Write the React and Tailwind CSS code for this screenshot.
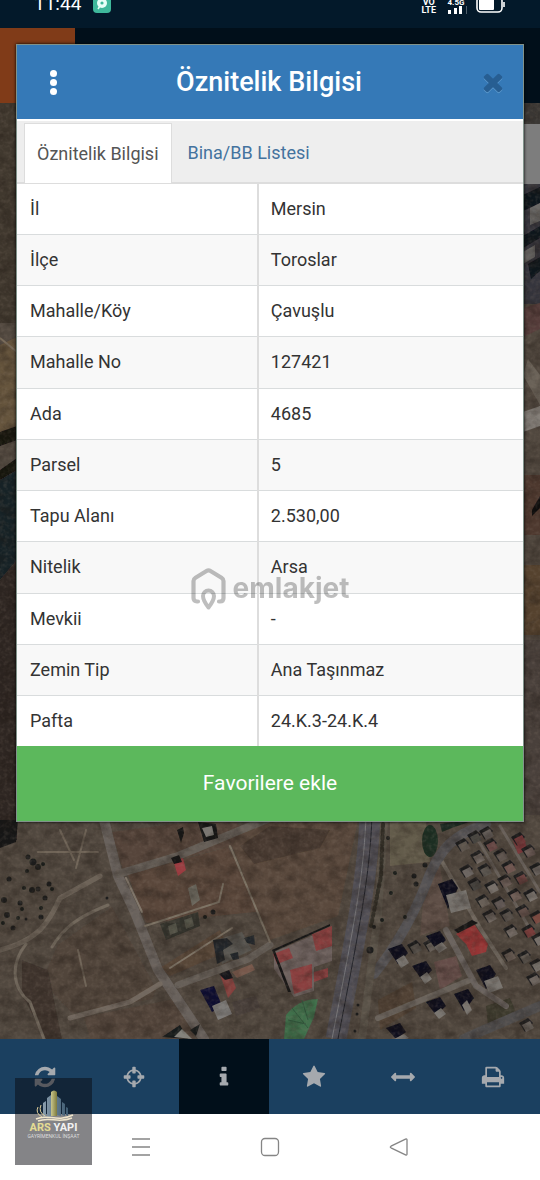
import React, { useState } from 'react';

const attributes = [
  ['İl', 'Mersin'],
  ['İlçe', 'Toroslar'],
  ['Mahalle/Köy', 'Çavuşlu'],
  ['Mahalle No', '127421'],
  ['Ada', '4685'],
  ['Parsel', '5'],
  ['Tapu Alanı', '2.530,00'],
  ['Nitelik', 'Arsa'],
  ['Mevkii', '-'],
  ['Zemin Tip', 'Ana Taşınmaz'],
  ['Pafta', '24.K.3-24.K.4'],
];

const icons = {
  refresh:
    'M1639 1056q0 5-1 7-64 268-268 434.5t-478 166.5q-146 0-282.5-55t-243.5-157l-129 129q-19 19-45 19t-45-19-19-45v-448q0-26 19-45t45-19h448q26 0 45 19t19 45-19 45l-137 137q71 66 161 102t187 36q134 0 250-65t186-179q11-17 53-117 8-23 30-23h192q13 0 22.5 9.5t9.5 22.5zm25-800v448q0 26-19 45t-45 19h-448q-26 0-45-19t-19-45 19-45l138-138q-148-137-349-137-134 0-250 65t-186 179q-11 17-53 117-8 23-30 23h-199q-13 0-22.5-9.5t-9.5-22.5v-7q65-268 270-434.5t480-166.5q146 0 284 55.5t245 156.5l130-129q19-19 45-19t45 19 19 45z',
  crosshairs:
    'M1325 1024h-109q-26 0-45-19t-19-45v-128q0-26 19-45t45-19h109q-32-108-112.5-188.5t-188.5-112.5v109q0 26-19 45t-45 19h-128q-26 0-45-19t-19-45v-109q-108 32-188.5 112.5t-112.5 188.5h109q26 0 45 19t19 45v128q0 26-19 45t-45 19h-109q32 108 112.5 188.5t188.5 112.5v-109q0-26 19-45t45-19h128q26 0 45 19t19 45v109q108-32 188.5-112.5t112.5-188.5zm339-192v128q0 26-19 45t-45 19h-143q-37 161-154.5 278.5t-278.5 154.5v143q0 26-19 45t-45 19h-128q-26 0-45-19t-19-45v-143q-161-37-278.5-154.5t-154.5-278.5h-143q-26 0-45-19t-19-45v-128q0-26 19-45t45-19h143q37-161 154.5-278.5t278.5-154.5v-143q0-26 19-45t45-19h128q26 0 45 19t19 45v143q161 37 278.5 154.5t154.5 278.5h143q26 0 45 19t19 45z',
  info: 'M1216 1344v128q0 26-19 45t-45 19h-512q-26 0-45-19t-19-45v-128q0-26 19-45t45-19h64v-384h-64q-26 0-45-19t-19-45v-128q0-26 19-45t45-19h384q26 0 45 19t19 45v576h64q26 0 45 19t19 45zm-128-1152v192q0 26-19 45t-45 19h-256q-26 0-45-19t-19-45v-192q0-26 19-45t45-19h256q26 0 45 19t19 45z',
  star: 'M1728 647q0 22-26 48l-363 354 86 500q1 7 1 20 0 21-10.5 35.5t-30.5 14.5q-19 0-40-12l-449-236-449 236q-22 12-40 12-21 0-31.5-14.5t-10.5-35.5q0-6 2-20l86-500-364-354q-25-27-25-48 0-37 56-46l502-73 225-455q19-41 49-41t49 41l225 455 502 73q56 9 56 46z',
  arrows:
    'M1792 896q0 26-19 45l-256 256q-19 19-45 19t-45-19-19-45v-128h-1024v128q0 26-19 45t-45 19-45-19l-256-256q-19-19-19-45t19-45l256-256q19-19 45-19t45 19 19 45v128h1024v-128q0-26 19-45t45-19 45 19l256 256q19 19 19 45z',
  print:
    'M448 1536h896v-256h-896v256zm0-640h896v-384h-160q-40 0-68-28t-28-68v-160h-640v640zm1152 64q0-26-19-45t-45-19-45 19-19 45 19 45 45 19 45-19 19-45zm128 0v416q0 13-9.5 22.5t-22.5 9.5h-224v160q0 40-28 68t-68 28h-960q-40 0-68-28t-28-68v-160h-224q-13 0-22.5-9.5t-9.5-22.5v-416q0-79 56.5-135.5t135.5-56.5h64v-544q0-40 28-68t68-28h672q40 0 88 20t76 48l152 152q28 28 48 76t20 88v256h64q79 0 135.5 56.5t56.5 135.5z',
  times:
    'M1490 1322q0 40-28 68l-136 136q-28 28-68 28t-68-28l-294-294-294 294q-28 28-68 28t-68-28l-136-136q-28-28-28-68t28-68l294-294-294-294q-28-28-28-68t28-68l136-136q28-28 68-28t68 28l294 294 294-294q28-28 68-28t68 28l136 136q28 28 28 68t-28 68l-294 294 294 294q28 28 28 68z',
};

const tools = [
  { id: 'refresh', label: 'Yenile' },
  { id: 'crosshairs', label: 'Konum' },
  { id: 'info', label: 'Bilgi' },
  { id: 'star', label: 'Favoriler' },
  { id: 'arrows', label: 'Ölçüm' },
  { id: 'print', label: 'Yazdır' },
];

// [x, y, size] of the shrubs on the west side
const shrubs = [
  [28, 857, 4], [33, 862, 6], [38, 867, 5], [43, 864, 3], [9, 879, 4], [27, 871, 3], [24, 888, 3],
  [32, 890, 5], [38, 889, 4], [49, 884, 4], [52, 889, 3], [45, 898, 4], [4, 900, 5], [20, 903, 4],
  [22, 909, 3], [7, 915, 5], [41, 908, 3], [41, 917, 4], [18, 918, 3], [3, 923, 3], [26, 919, 2],
  [13, 928, 4], [107, 898, 2], [205, 917, 3], [213, 912, 4], [370, 950, 6],
  [388, 838, 3], [395, 873, 3], [414, 876, 4], [391, 893, 3], [416, 884, 4], [425, 865, 4], [358, 1005, 2],
  [357, 1014, 2], [355, 1031, 2], [374, 927, 3], [382, 920, 3], [405, 917, 3],
];

// [x, y, roof colour] of the houses in the eastern district
const houses = [
  [462, 846, '#5d544e'], [474, 838, '#4a4642'], [486, 834, '#6b645e'], [490, 846, '#6a4a46'], [477, 858, '#746c66'],
  [500, 856, '#5e5450'], [466, 872, '#6c6662'], [484, 871, '#5a5450'], [508, 868, '#6e5450'], [518, 840, '#7b3a3c'],
  [528, 852, '#6a5a54'], [474, 885, '#4b4844'], [491, 888, '#77706a'], [504, 882, '#6b5c56'], [520, 879, '#6b433f'],
  [536, 870, '#6a645e'], [482, 902, '#696159'], [498, 904, '#5f5753'], [514, 896, '#705e58'], [530, 896, '#7c7670'],
  [489, 917, '#6e6660'], [506, 916, '#5b5550'], [522, 912, '#62504a'], [536, 918, '#7a4840'], [510, 932, '#746c66'],
  [528, 932, '#7a3d3a'], [538, 940, '#77706a'], [508, 956, '#6c6058'], [524, 958, '#5c5650'], [536, 966, '#7a746e'],
  [533, 980, '#6e6660'], [526, 1026, '#6c6660'], [430, 946, '#6a645c'], [414, 948, '#5a554f'],
];

// [x, y, w, h] of the apartment blocks, each casting a shadow to the north west
const blocks = [
  [446, 890, 26, 26], [396, 955, 14, 16], [434, 942, 14, 14], [420, 972, 13, 15], [484, 976, 20, 20],
  [434, 1008, 13, 14], [462, 1000, 11, 18], [394, 1034, 16, 12],
];

function Icon({ name, className }) {
  return (
    <svg viewBox="0 0 1792 1792" fill="currentColor" className={className} aria-hidden="true">
      <path d={icons[name]} />
    </svg>
  );
}

function SatelliteMap() {
  return (
    <svg
      viewBox="0 103 540 936"
      preserveAspectRatio="xMidYMax slice"
      className="absolute inset-0 h-full w-full"
      aria-hidden="true"
    >
      <defs>
        <filter id="grain" x="0" y="0" width="100%" height="100%" colorInterpolationFilters="sRGB">
          <feTurbulence type="fractalNoise" baseFrequency="0.07 0.09" numOctaves="5" seed="7" />
          <feColorMatrix values="0 0 0 0 0.12  0 0 0 0 0.09  0 0 0 0 0.07  2.4 0 0 0 -0.95" />
        </filter>
        <filter id="light" x="0" y="0" width="100%" height="100%" colorInterpolationFilters="sRGB">
          <feTurbulence type="fractalNoise" baseFrequency="0.25" numOctaves="3" seed="3" />
          <feColorMatrix values="0 0 0 0 0.54  0 0 0 0 0.48  0 0 0 0 0.43  0 2.4 0 0 -1" />
        </filter>
        <filter id="soft">
          <feGaussianBlur stdDeviation="0.7" />
        </filter>
      </defs>
      <rect y="103" width="540" height="936" fill="#51483f" />

      <g filter="url(#soft)">
        {/* strip west of the dialog */}
        <path d="M0 103h17v220H0z" fill="#41382f" />
        <path d="M0 345l17-8v90l-17 6z" fill="#66543e" />
        <path d="M0 338l17 14" stroke="#776a58" strokeWidth="2" />
        <path d="M0 432l17-6v14l-17 6zM0 470l17-12v12l-17 10z" fill="#14120f" />
        <path d="M0 480l17-10v90l-17 20z" fill="#192025" />
        <path d="M0 580l17-20v280H0z" fill="#2e2523" />
        <path d="M0 820h18l-2 22-16 6z" fill="#191919" />

        {/* strip east of the dialog */}
        <path d="M523 103h17v25h-17z" fill="#3b3835" />
        <path d="M523 184h17v120h-17z" fill="#34353c" />
        <path d="M523 195l17-8v16l-17 8zM523 236l17-10v12l-17 10zM528 264l12-7v14l-9 8z" fill="#10121c" />
        <path d="M530 208l10-5v18l-10 4zM523 252l12-7v12l-12 7z" fill="#696866" />
        <path d="M523 308l17-5v26l-17 8z" fill="#573d3b" />
        <path d="M523 375l17 30v-30l-12-16z" fill="#6a6258" />
        <path d="M523 412l17-6v20l-17 6z" fill="#85807a" />
        <path d="M523 475h17v60h-17z" fill="#4d372e" />
        <path d="M532 510l8-14v12l-8 8z" fill="#110f10" />
        <path d="M523 565h17v70h-17z" fill="#54432f" />
        <path d="M523 640h17v175h-17z" fill="#49413a" />

        {/* fields */}
        <path d="M112 832l62-8 60-4 20 20-130 34z" fill="#56453a" />
        <path d="M128 875l100-28 36 64-118 12z" fill="#5a463a" />
        <path d="M250 820h108l-20 96-68 24-38-94z" fill="#5a4a3c" />
        <path d="M240 846l30-20 60 4-10 18-66 16z" fill="#4a3a30" />
        <path d="M58 945l54-38 44 82-4 10-80 14-30-32z" fill="#51443a" />
        <path d="M22 960l26 10 14 69H46l-24-44z" fill="#3f362f" />
        <path d="M160 968l60-38 10 20-60 26z" fill="#594639" />
        <path d="M90 1039l-6-22 90-18 22 40z" fill="#54473c" />
        <path d="M390 822h36l4 40-40 4z" fill="#645b4b" />
        <path d="M424 890l16-24 10 60-30 10z" fill="#5e5046" />
        <path d="M378 1000l34-18 4 26-36 22z" fill="#514335" />
        <path d="M434 962l22-6 6 20-22 14z" fill="#654e48" />
        <path d="M486 1006l24-8 6 14-28 14z" fill="#3e3a2d" />

        {/* roads and tracks */}
        <g fill="none" strokeLinecap="round">
          <path d="M104 820l14 56 16 34 24 60 46 69" stroke="#69625d" strokeWidth="10" />
          <path d="M118 874l60-18 92-38" stroke="#665f58" strokeWidth="8" />
          <path d="M178 985l70-26 22-14" stroke="#665f58" strokeWidth="7" />
          <path d="M70 1018l60-16 30-18" stroke="#72685e" strokeWidth="5" />
          <path d="M0 950c40-10 50-30 60-52l40-22" stroke="#6d6459" strokeWidth="5" />
          <path d="M108 905c-30 12-44 22-56 42M26 944c-16 20-14 44 4 58l14 37" stroke="#71675c" strokeWidth="3" />
          <path d="M38 852h60M60 830l14 30M86 830l-10 38M78 950l8 36" stroke="#6f6558" strokeWidth="2" />
          <path d="M145 926l74-24 4-18M230 846l40 96M170 968l62-40" stroke="#7e7466" strokeWidth="2" />
          <path d="M126 878l16 34" stroke="#82786c" strokeWidth="2" />
          <path d="M540 1006l-56 24-20 9" stroke="#4f4d4d" strokeWidth="10" />
          <path d="M378 1018l92-38" stroke="#6a635b" strokeWidth="6" />
          <path d="M440 858l40 70 26 40" stroke="#70685e" strokeWidth="4" />
          <path d="M446 930l30 56 30 20" stroke="#6a645e" strokeWidth="6" />
          <path d="M500 826l40 66M478 840l56 96" stroke="#68615a" strokeWidth="3" />
          <path d="M374 974c24-30 40-60 52-90 14-38 30-50 60-60" stroke="#555355" strokeWidth="10" />
          <path d="M384 824l-6 90-16 125" stroke="#5a5248" strokeWidth="8" />
          <path d="M370 815c-2 60-12 110-34 224" stroke="#515056" strokeWidth="21" strokeLinecap="butt" />
          <path d="M372 815c-2 60-12 110-34 224" stroke="#22232a" strokeWidth="1" />
          <path d="M366 815c-2 60-12 110-34 224" stroke="#77767a" strokeWidth="1" />
          <path d="M383 824l-2 52-10 50" stroke="#302f28" strokeWidth="4" strokeDasharray="3 3" />
        </g>

        {/* parks and greenery */}
        <ellipse cx="430" cy="841" rx="8" ry="16" fill="#1c2f22" />
        <path d="M440 824l40-6-28 10-10 4z" fill="#1f2b20" />
        <path d="M286 1015c8-10 18-16 32-16l-4 18-10 22h-20z" fill="#3f6f4c" />
        <path d="M292 1008l16 20M288 1020l18 4M302 1000l6 20" stroke="#31583c" />

        {/* red roofs */}
        <path d="M274 952l58-25v34l-18 6v24l-20 6-20-28z" fill="#6e625e" />
        <path d="M273 954l16-6 4 10-16 6zM312 934l20-8v20l-16 5zM290 970l22-6v24l-18 6zM314 972l14-4v9l-14 5z" fill="#8b3f41" />
        <path d="M272 950l58-26v2l-55 25 16 41h-3z" fill="#171617" />
        <path d="M456 934l18-10 14 20-2 8-14 4-6-12z" fill="#963536" />
        <path d="M454 930l18-10 6 3-20 10z" fill="#151517" />
        <path d="M512 838l12 2 4 10-10 4z" fill="#7d393b" />
        <path d="M173 860l10-2 3 12-8 6z" fill="#9c3b40" />
        <path d="M171 858l8-3 3 7-8 2z" fill="#141414" />
        <path d="M220 974l10-2 6 16-8 10z" fill="#853f3d" />
        <path d="M219 974l10-4 4 8-8 2z" fill="#18171a" />
        <path d="M232 972l20-8 3 6-18 8z" fill="#77594c" />

        {/* buildings west of the highway */}
        <path d="M198 822l18 2 2 14-14 4z" fill="#131414" />
        <path d="M202 828l10-2 2 9-8 2z" fill="#7a7772" />
        <path d="M177 830l6-3 1 6-3 10z" fill="#161514" />
        <path d="M188 888l8-4 4 16-8 6z" fill="#6d6b60" />
        <path d="M160 924l38-12 2 14-34 14z" fill="#34352d" />
        <path d="M168 926l8-3 2 9-8 3zM184 920l8-3 2 9-8 3z" fill="#54544a" />
        <path d="M216 940l26-8 10 18-30 14z" fill="#5a5852" />
        <path d="M213 940l14-2 6 6-10 6 2 10-8 4zM244 938l10-3 1 10-8-2zM230 954l8-2 1 7-6 1z" fill="#24282a" />
        <path d="M200 990l14-4 8 20-10 6z" fill="#0e1030" />
        <path d="M212 1006l14-6 6 14-14 6z" fill="#7e7c7a" />
        <path d="M232 1002l24-6 4 12-24 8z" fill="#4b423e" />
        <path d="M162 1037l18-12 8 14zM190 1030l10-6-4 12z" fill="#191a1b" />
        <path d="M174 1037l8-8 10 10z" fill="#84837d" />

        {houses.map(([x, y, roof]) => (
          <g key={`${x}-${y}`}>
            <path d={`M${x - 7} ${y - 3}l9-5 5 5-8 9z`} fill="#1c1c1f" />
            <path d={`M${x - 4} ${y - 1}l8-4 4 7-8 4z`} fill={roof} />
          </g>
        ))}
        {blocks.map(([x, y, w, h]) => (
          <g key={`${x}-${y}`}>
            <path d={`M${x - 8} ${y - 6}l14-5 6 9-10 ${h - 5}z`} fill="#0b0d1a" />
            <path d={`M${x} ${y + 5}l${w - 6}-5 5 ${h - 8}-${w - 6} 5z`} fill="#7a7671" />
          </g>
        ))}
        {shrubs.map(([x, y, size]) => (
          <circle key={`${x}-${y}`} cx={x} cy={y} r={size / 2 + 0.5} fill="#1c1e1a" />
        ))}
      </g>

      <rect y="103" width="540" height="936" filter="url(#light)" opacity="0.2" />
      <rect y="103" width="540" height="936" filter="url(#grain)" opacity="0.36" />
    </svg>
  );
}

function StatusBar() {
  return (
    <div className="h-7 bg-[#03192a] px-[34px] text-white">
      <div className="flex h-2 items-center">
        <span className="text-[19px] leading-2">11:44</span>
        <svg viewBox="0 0 18 18" className="ml-3 size-[18px] shrink-0" aria-hidden="true">
          <rect width="18" height="18" rx="4" fill="#3fb89b" />
          <circle cx="9" cy="8" r="5" fill="#e8fff8" />
          <circle cx="9" cy="8" r="1.6" fill="#3fb89b" />
          <path d="M5 14l2-3" stroke="#e8fff8" strokeWidth="1.5" />
        </svg>
        <span className="ml-auto pt-1 text-center text-[9px] leading-2 font-bold">
          VO
          <br />
          LTE
        </span>
        <div className="ml-2 flex flex-col items-center pt-1">
          <span className="text-[8px] leading-[7px] font-bold">4.5G</span>
          <svg viewBox="0 0 24 8" className="h-2 w-6" fill="#fff" aria-hidden="true">
            <path d="M4 4h3v4H4zM10 2h3v6h-3zM15 0h3v8h-3z" />
            <path d="M22 0h1v8h-1z" opacity="0.3" />
          </svg>
        </div>
        <svg viewBox="0 0 30 17" className="ml-2 h-[17px] w-[30px]" fill="none" aria-hidden="true">
          <rect x="1" y="1" width="25" height="15" rx="4" stroke="#fff" strokeWidth="1.6" />
          <rect x="3" y="3" width="15" height="11" rx="1" fill="#fff" />
          <path d="M28 6v5" stroke="#fff" strokeWidth="1.6" />
        </svg>
      </div>
    </div>
  );
}

function AttributeDialog() {
  const [tab, setTab] = useState('info');

  const tabClass = (id) =>
    tab === id
      ? 'border border-b-0 border-[#dddddd] bg-white px-3 text-[#555555]'
      : 'px-4 text-[#44739e]';

  return (
    <section
      role="dialog"
      aria-labelledby="dialog-title"
      className="absolute inset-x-4 top-11 border border-[#2c4a3c]/60 bg-white text-lg text-[#333333] shadow-[0_0_3px_#000]"
    >
      <header className="flex h-[74px] items-center justify-between bg-[#3579b7] pr-1.5 pl-5">
        <button type="button" aria-label="Menü" className="flex w-8 flex-col items-center gap-0.5">
          <span className="size-[7px] rounded-full bg-white" />
          <span className="size-[7px] rounded-full bg-white" />
          <span className="size-[7px] rounded-full bg-white" />
        </button>
        <h1 id="dialog-title" className="text-[27px] font-medium text-white">
          Öznitelik Bilgisi
        </h1>
        <button
          type="button"
          aria-label="Kapat"
          className="flex w-12 justify-center text-[#275e92] drop-shadow-[0_1px_0_#5b98cc]"
        >
          <Icon name="times" className="size-7" />
        </button>
      </header>

      <div
        role="tablist"
        className="flex h-[65px] items-end border-t-2 border-b-2 border-t-white border-b-[#dddddd] bg-[#eeeeee] pl-[7px]"
      >
        <button
          type="button"
          role="tab"
          aria-selected={tab === 'info'}
          onClick={() => setTab('info')}
          className={`-mb-px h-[60px] ${tabClass('info')}`}
        >
          Öznitelik Bilgisi
        </button>
        <button
          type="button"
          role="tab"
          aria-selected={tab === 'list'}
          onClick={() => setTab('list')}
          className={`-mb-px h-[60px] ${tabClass('list')}`}
        >
          Bina/BB Listesi
        </button>
      </div>

      <table className="h-[562px] w-full table-fixed border-collapse">
        <colgroup>
          <col className="w-[47.6%]" />
          <col />
        </colgroup>
        <tbody>
          {attributes.map(([label, value]) => (
            <tr key={label} className="border-b border-[#d9dcdd] last:border-b-0 even:bg-[#f8f8f8]">
              <th scope="row" className="border-r-2 border-[#dddddd] px-[13px] text-left font-normal">
                {label}
              </th>
              <td className="px-3">{value}</td>
            </tr>
          ))}
        </tbody>
      </table>

      <button type="button" className="block h-[75px] w-full bg-[#5cb85c] text-[21px] text-white">
        Favorilere ekle
      </button>
    </section>
  );
}

function Watermark() {
  return (
    <div className="pointer-events-none absolute inset-x-0 top-[568px] flex items-center justify-center gap-[7px] text-black opacity-25">
      <svg viewBox="0 0 35 43" className="h-[43px] w-[35px]" fill="none" stroke="currentColor" aria-hidden="true">
        <path
          d="M7 33.500H6q-3.500 0-3.500-3.500V13q0-2 2-3.200L15.500 3q2-1.200 4 0L30.500 9.800q2 1.200 2 3.200V30q0 3.500-3.500 3.500h-1"
          strokeWidth="4.200"
          strokeLinecap="round"
        />
        <path d="M17.500 39.500q-5.500-7-5.500-11.500a5.500 5.500 0 0 1 11 0q0 4.500-5.500 11.500z" strokeWidth="4" strokeLinejoin="round" />
      </svg>
      <span className="mb-1 font-['Inter',sans-serif] text-[28px] leading-9 font-bold">emlakjet</span>
    </div>
  );
}

function AgencyBadge() {
  return (
    <div className="pointer-events-none absolute bottom-[15px] left-[15px] flex h-[87px] w-[77px] flex-col items-center bg-[#0a0a10]/50 pt-3">
      <svg viewBox="0 0 44 32" className="h-8 w-11" aria-hidden="true">
        <defs>
          <linearGradient id="tower" x1="0" x2="1" y1="0" y2="0">
            <stop offset="0" stopColor="#c9c68c" />
            <stop offset="1" stopColor="#7d7a3c" />
          </linearGradient>
          <linearGradient id="steel" x1="0" x2="1" y1="0" y2="0">
            <stop offset="0" stopColor="#8a9dac" />
            <stop offset="1" stopColor="#3d5a70" />
          </linearGradient>
        </defs>
        <path d="M11 13l3-2v15l-3 1zM15 8l4-3v22h-4zM25 6l4 3v17l-4-1zM30 12l3 2v12l-3-1zM34 17l2 1v8l-2-1z" fill="url(#steel)" />
        <path d="M19 2q3-3 6 0v24h-6z" fill="url(#tower)" />
        <path d="M6 17q-3 6 4 10M9 15q-3 7 4 11" stroke="#e0cf9a" fill="none" />
        <path d="M4 29c12-6 20 4 37-4M6 31c12-5 20 3 34-3" stroke="#efe5cb" strokeWidth="1.500" fill="none" />
      </svg>
      <span className="text-[11px] leading-3 font-bold whitespace-nowrap">
        <span className="text-[#e4dc93]">ARS</span> <span className="text-[#f2f2f2]">YAPI</span>
      </span>
      <span className="text-[5px] leading-[5px] whitespace-nowrap text-[#dddddd]">GAYRİMENKUL İNŞAAT</span>
    </div>
  );
}

export default function App() {
  const [activeTool, setActiveTool] = useState('info');

  return (
    <div className="relative flex min-h-screen flex-col overflow-hidden bg-white font-['Roboto',sans-serif]">
      <StatusBar />
      <div className="flex h-[75px] bg-[#010f1a]">
        <div className="w-[75px] bg-[#803b18]" />
      </div>

      <main className="relative flex-1">
        <SatelliteMap />
        <div className="absolute top-[21px] right-0 h-[60px] w-[75px] bg-[#7d7d7d]" />
      </main>

      <nav className="grid h-[75px] grid-cols-6 bg-[#1b4060] pr-0.5 text-[#a5a9ae]">
        {tools.map((tool) => (
          <button
            key={tool.id}
            type="button"
            aria-label={tool.label}
            onClick={() => setActiveTool(tool.id)}
            className={`flex items-center justify-center ${activeTool === tool.id ? 'bg-[#010f1a]' : ''}`}
          >
            <Icon name={tool.id} className="size-6" />
          </button>
        ))}
      </nav>

      <div className="grid h-[66px] grid-cols-3 items-center justify-items-center px-19 text-[#858585]">
        <button type="button" aria-label="Son uygulamalar">
          <svg viewBox="0 0 20 20" className="size-5" stroke="currentColor" strokeWidth="1.500" aria-hidden="true">
            <path d="M1 2h18M1 10h18M1 18h18" />
          </svg>
        </button>
        <button type="button" aria-label="Ana ekran">
          <svg viewBox="0 0 20 20" className="size-5" fill="none" stroke="currentColor" strokeWidth="1.300" aria-hidden="true">
            <rect x="1.500" y="1.500" width="17" height="17" rx="3.500" />
          </svg>
        </button>
        <button type="button" aria-label="Geri">
          <svg viewBox="0 0 20 20" className="size-5" fill="none" stroke="currentColor" strokeWidth="1.300" aria-hidden="true">
            <path d="M16.500 2.200Q18 1.500 18 3v14q0 1.500-1.500.8L2 10.800q-1.400-.8 0-1.600z" />
          </svg>
        </button>
      </div>

      <AttributeDialog />
      <Watermark />
      <AgencyBadge />
    </div>
  );
}
